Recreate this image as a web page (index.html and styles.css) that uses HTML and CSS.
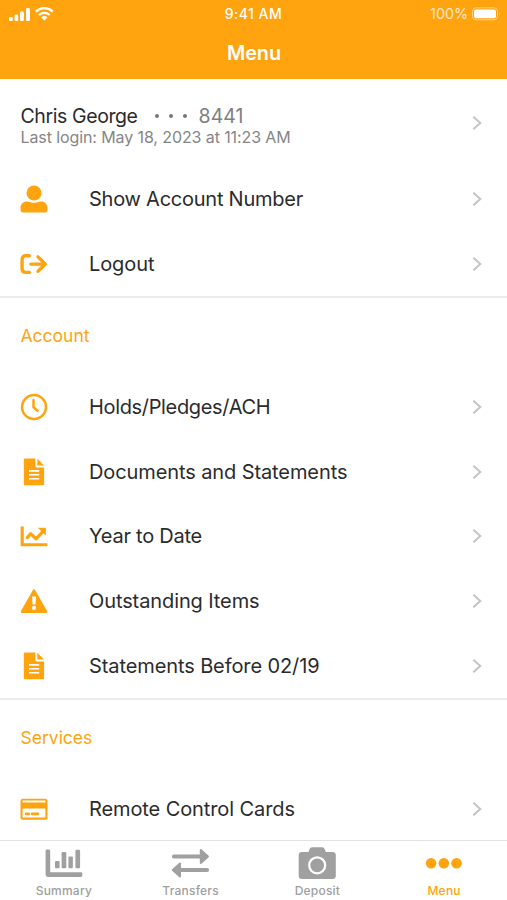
FILE: index.html
```html
<!DOCTYPE html>
<html lang="en">
<head>
<meta charset="utf-8">
<title>Menu</title>
<link rel="stylesheet" href="styles.css">
</head>
<body>
<svg class="defs" aria-hidden="true">
  <symbol id="chevron" viewBox="0 0 12 18"><path d="M2.300 2.700 9.300 9l-7 6.300" fill="none" stroke="currentColor" stroke-width="2"/></symbol>
  <symbol id="user" viewBox="0 0 28 28"><circle cx="14" cy="8" r="7.500"/><path d="M6.800 16.600c2 0 3.200 1.200 7.200 1.200s5.200-1.200 7.200-1.200c3.600 0 6.200 2.600 6.200 6.300v2.200c0 1.500-.9 2.400-2.400 2.400H3c-1.500 0-2.400-.9-2.400-2.400v-2.200c0-3.700 2.600-6.300 6.200-6.300z"/></symbol>
  <symbol id="logout" viewBox="0 0 28 28"><path d="M9.300 5.800H5.800Q2.100 5.800 2.100 9.500v9.200q0 3.700 3.700 3.700h3.500M10.800 14.100h14M18 6.900l7.300 7.200-7.300 7.200" fill="none" stroke="currentColor" stroke-width="3.400" stroke-linecap="round" stroke-linejoin="round"/></symbol>
  <symbol id="clock" viewBox="0 0 28 28"><circle cx="14" cy="14" r="12" fill="none" stroke="currentColor" stroke-width="2.500"/><path d="M13.500 7v7.300l4 3.500" fill="none" stroke="currentColor" stroke-width="2.500" stroke-linecap="round" stroke-linejoin="round"/></symbol>
  <symbol id="document" viewBox="0 0 28 28"><path d="M5 .5h10.400v7.600q0 1.300 1.300 1.300h7.400v16.700q0 1.200-1.200 1.200H5q-1.200 0-1.200-1.200V1.700Q3.800.5 5 .5z"/><path d="M17.300.7l6.800 6.800h-6.800z"/><path d="M9 12.900h10.200M9 16.800h10.200M9 20.700h10.200" fill="none" stroke="#fff" stroke-width="1.600"/></symbol>
  <symbol id="trend" viewBox="0 0 28 28"><path d="M2.200 4.500v18.300h25.200" fill="none" stroke="currentColor" stroke-width="3.100"/><path d="M7.300 15.600l3.300-3.800 5.500 5 7.200-7.800" fill="none" stroke="currentColor" stroke-width="3.200" stroke-linecap="round" stroke-linejoin="round"/><path d="M17.800 5.700h8.100v8.100z"/></symbol>
  <symbol id="warning" viewBox="0 0 28 28"><path d="M14 3.500 26 24.700H2z" stroke="currentColor" stroke-width="2.400" stroke-linejoin="round"/><path d="M12 9.600h4l-.5 8h-3z" fill="#fff"/><circle cx="14" cy="20.900" r="2.100" fill="#fff"/></symbol>
  <symbol id="card" viewBox="0 0 28 28"><path d="M3 3.700h22q2.500 0 2.500 2.500v16q0 2.500-2.500 2.500H3q-2.500 0-2.500-2.500v-16Q.5 3.700 3 3.700z"/><path d="M2.600 5.600h22.800v2H2.600zM2.600 13.500h22.800v9H2.600z" fill="#fff"/><path d="M6 18.800h2.800M12 18.800h6" fill="none" stroke="currentColor" stroke-width="2.700" stroke-linecap="round"/></symbol>
</svg>

<header class="header">
  <div class="status">
    <div class="signal">
      <svg width="46" height="16" viewBox="0 0 46 16" fill="#fff"><rect x="1" y="11" width="3.700" height="4" rx="1.300"/><rect x="6.500" y="8.500" width="3.700" height="6.500" rx="1.300"/><rect x="12" y="5.500" width="3.900" height="9.500" rx="1.300"/><rect x="18" y="2" width="3.900" height="13" rx="1.300"/><g fill="none" stroke="#fff" stroke-width="2.300"><path d="M28 5.600a12 12 0 0 1 16.700 0M31 9a7.800 7.800 0 0 1 10.700 0"/></g><path d="M33.200 11.400a4.600 4.600 0 0 1 6.300 0l-3.150 3.200z"/></svg>
    </div>
    <span class="time">9:41 AM</span>
    <div class="power"><span class="percent">100%</span>
      <svg width="30" height="14" viewBox="0 0 30 14"><rect x="1.500" y=".8" width="25" height="12" rx="3.500" fill="none" stroke="#ffd08a" stroke-width="1"/><rect x="3" y="2.400" width="22" height="8.800" rx="2" fill="#fff"/><path d="M28 4.800q1.800 2 0 4z" fill="#ffd08a"/></svg>
    </div>
  </div>
  <h1 class="title">Menu</h1>
</header>

<main class="content">
  <section class="group">
    <div class="profile">
      <div class="profile-text">
        <div class="profile-line"><span class="name">Chris George</span><span class="dots"><i></i><i></i><i></i></span><span class="digits">8441</span></div>
        <div class="login">Last login: May 18, 2023 at 11:23 AM</div>
      </div>
      <svg class="chevron"><use href="#chevron"/></svg>
    </div>
    <div class="row"><svg class="icon"><use href="#user"/></svg><span class="label snug">Show Account Number</span><svg class="chevron"><use href="#chevron"/></svg></div>
    <div class="row"><svg class="icon"><use href="#logout"/></svg><span class="label">Logout</span><svg class="chevron"><use href="#chevron"/></svg></div>
  </section>
  <section class="group">
    <h2 class="heading">Account</h2>
    <div class="row"><svg class="icon"><use href="#clock"/></svg><span class="label tight">Holds/Pledges/ACH</span><svg class="chevron"><use href="#chevron"/></svg></div>
    <div class="row"><svg class="icon"><use href="#document"/></svg><span class="label">Documents and Statements</span><svg class="chevron"><use href="#chevron"/></svg></div>
    <div class="row"><svg class="icon"><use href="#trend"/></svg><span class="label snug">Year to Date</span><svg class="chevron"><use href="#chevron"/></svg></div>
    <div class="row"><svg class="icon"><use href="#warning"/></svg><span class="label">Outstanding Items</span><svg class="chevron"><use href="#chevron"/></svg></div>
    <div class="row"><svg class="icon"><use href="#document"/></svg><span class="label">Statements Before 02/19</span><svg class="chevron"><use href="#chevron"/></svg></div>
  </section>
  <section class="group">
    <h2 class="heading">Services</h2>
    <div class="row"><svg class="icon"><use href="#card"/></svg><span class="label">Remote Control Cards</span><svg class="chevron"><use href="#chevron"/></svg></div>
  </section>
</main>

<nav class="tabs">
  <div class="tab"><svg class="tab-icon" viewBox="0 0 40 34"><path d="M3.900 2.500h2q1.300 0 1.300 1.300v21.400h30.800q1.300 0 1.300 1.300v2.100q0 1.300-1.300 1.300H5.200q-2.600 0-2.600-2.600V3.800q0-1.300 1.300-1.300z"/><rect x="12" y="14" width="4.600" height="7.200" rx="1.200"/><rect x="18.600" y="5" width="4.700" height="16.200" rx="1.200"/><rect x="25.400" y="9.500" width="4.500" height="11.700" rx="1.200"/><rect x="32.400" y="2.700" width="4.700" height="18.500" rx="1.200"/></svg><span>Summary</span></div>
  <div class="tab"><svg class="tab-icon" viewBox="0 0 40 34"><path d="M4 9.500h28M9 23h28" fill="none" stroke="currentColor" stroke-width="4.200" stroke-linecap="round"/><path d="M30.800 3v13l7.200-6.500zM10 16.500v13L2.800 23z" stroke="currentColor" stroke-width="2" stroke-linejoin="round"/></svg><span>Transfers</span></div>
  <div class="tab"><svg class="tab-icon" viewBox="0 0 40 34"><path d="M5 5h6.500l1-2.800Q13.200.2 15.200.2h9.900q2 0 2.700 2l1 2.800H35.500q3.300 0 3.300 3.300v20.400q0 3.300-3.300 3.300H5q-3.300 0-3.300-3.300V8.300Q1.700 5 5 5z"/><circle cx="20.200" cy="18.300" r="8" fill="none" stroke="#fff" stroke-width="2.200"/></svg><span>Deposit</span></div>
  <div class="tab active"><svg class="tab-icon" viewBox="0 0 40 34"><circle cx="7.100" cy="16.300" r="5.300"/><circle cx="19.800" cy="16.300" r="5.300"/><circle cx="32.500" cy="16.300" r="5.300"/></svg><span>Menu</span></div>
</nav>
</body>
</html>
```
FILE: styles.css
```css
* { box-sizing: border-box; }
body { margin: 0; width: 507px; height: 900px; overflow: hidden; display: flex; flex-direction: column; background: #fff; font-family: Inter, sans-serif; color: #2b2b2d; }
.defs { display: none; }
svg { display: block; flex: none; fill: currentColor; }
.header { height: 79px; flex: none; background: #ffa30f; color: #fff; }
.status { height: 27px; display: grid; grid-template-columns: 1fr auto 1fr; align-items: center; padding: 0 6px 0 8px; }
.time { font-size: 14px; font-weight: 500; letter-spacing: .5px; margin-left: -2px; }
.power { display: flex; justify-content: flex-end; align-items: center; gap: 3px; }
.percent { font-size: 14.300px; color: #ffe9c8; }
.title { margin: 0; height: 51px; display: flex; align-items: center; justify-content: center; font-size: 19.800px; font-weight: 600; padding-left: 1px; }
.content { flex: 1; min-height: 0; overflow: hidden; }
.group + .group { border-top: 2px solid #ececec; }
.profile { height: 87.600px; padding: 0 24px 0 20.500px; display: flex; align-items: center; justify-content: space-between; }
.profile-text { padding-top: 6px; }
.profile-line { display: flex; align-items: center; height: 22px; font-size: 19.500px; }
.name { letter-spacing: -.4px; }
.dots { display: flex; gap: 10px; margin: 0 12px 0 17px; }
.dots i { width: 4px; height: 4px; border-radius: 50%; background: #77777a; }
.digits { color: #808083; }
.login { height: 20px; line-height: 20px; font-size: 16px; letter-spacing: -.1px; color: #858588; }
.row { height: 64.75px; padding: 0 24px 0 20px; display: flex; align-items: center; }
.icon { width: 28px; height: 28px; color: #ffa30f; }
.label { flex: 1; padding-left: 41px; font-size: 20px; letter-spacing: -.1px; white-space: nowrap; }
.snug { letter-spacing: -.24px; }
.tight { letter-spacing: -.34px; }
.chevron { width: 12px; height: 18px; color: #c5c5c7; }
.heading { margin: 0; height: 76.500px; padding: 0 20.500px 2px; display: flex; align-items: center; font-size: 17.500px; font-weight: 400; color: #ffa30f; }
.tabs { height: 60px; flex: none; display: grid; grid-template-columns: repeat(4, 1fr); border-top: 1px solid #e3e3e3; color: #a0a0a0; }
.tab { display: flex; flex-direction: column; align-items: center; gap: 2px; padding-top: 6px; font-size: 12px; font-weight: 500; letter-spacing: .22px; }
.tab span { padding-left: 1px; }
.tab-icon { width: 40px; height: 34px; }
.active { color: #ffa30f; }
```
